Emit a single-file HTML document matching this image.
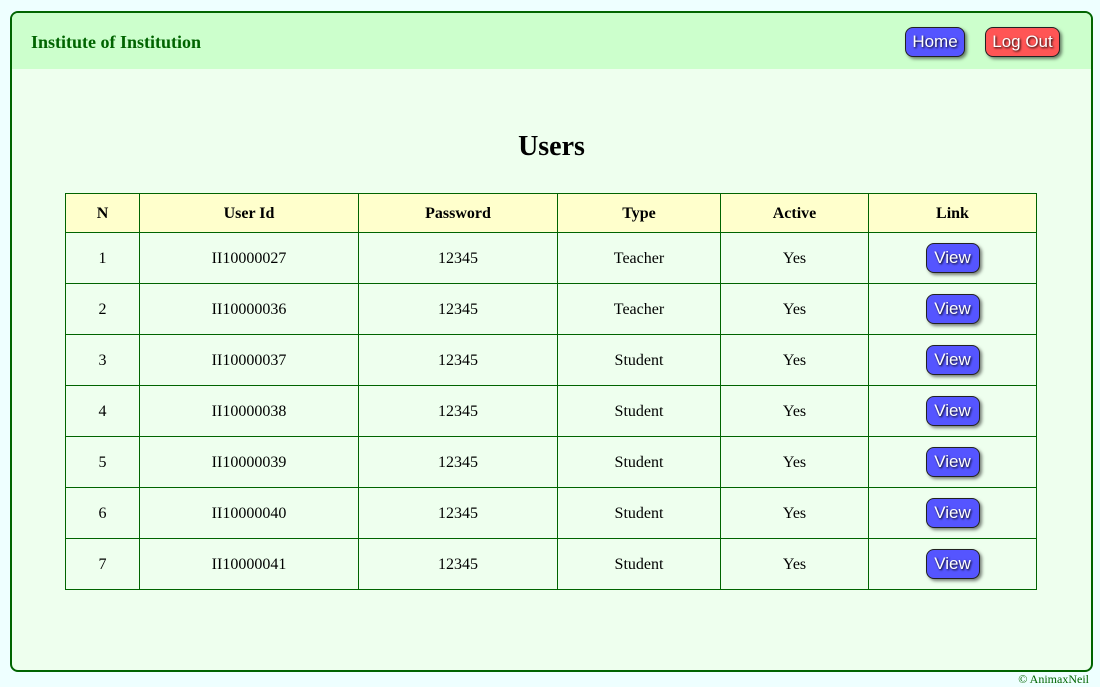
<!DOCTYPE html>
<html><head><style>
body{margin:0;background:#eeffff;font-family:"Liberation Serif",serif;width:1100px;height:687px;position:relative;overflow:hidden}
.box{position:absolute;left:10px;top:11px;width:1079px;height:657px;border:2px solid #006400;border-radius:8px;background:#eeffee;overflow:hidden}
.hdr{height:56px;background:#ccffcc;position:relative}
.title{position:absolute;left:19px;top:19px;font-weight:bold;font-size:18px;color:#006400}
.btn{position:absolute;font-family:"Liberation Sans",sans-serif;color:#fff;font-size:17px;border:1px solid #222;border-radius:8px;box-shadow:2px 2px 3px rgba(0,0,0,.5);text-shadow:1px 1px 2px #000;text-align:center;box-sizing:border-box}
.blue{background:#5555ff}.red{background:#ff5555}
h1{position:absolute;left:0;right:0;top:118px;margin:0;text-align:center;font-size:28px}
table{position:absolute;left:53px;top:180px;border-collapse:collapse;font-size:16px}
td,th{border:1px solid #006400;text-align:center;padding:2px 0 0 0}
th{background:#ffffcc;height:36px}
td{height:48px}
.v{display:inline-block;position:relative;width:54px;height:30px;line-height:28px;top:-1px}
.foot{position:absolute;right:11px;top:672px;font-size:12px;color:#006400}
</style></head><body>
<div class="box">
<div class="hdr"><div class="title">Institute of Institution</div>
<div class="btn blue" style="left:893px;top:14px;width:60px;height:30px;line-height:27px">Home</div>
<div class="btn red" style="left:973px;top:14px;width:75px;height:30px;line-height:27px">Log Out</div>
</div>
<h1>Users</h1>
<table>
<tr><th style="width:73px">N</th><th style="width:218px">User Id</th><th style="width:198px">Password</th><th style="width:162px">Type</th><th style="width:147px">Active</th><th style="width:167px">Link</th></tr>
<tr><td>1</td><td>II10000027</td><td>12345</td><td>Teacher</td><td>Yes</td><td><span class="btn blue v">View</span></td></tr>
<tr><td>2</td><td>II10000036</td><td>12345</td><td>Teacher</td><td>Yes</td><td><span class="btn blue v">View</span></td></tr>
<tr><td>3</td><td>II10000037</td><td>12345</td><td>Student</td><td>Yes</td><td><span class="btn blue v">View</span></td></tr>
<tr><td>4</td><td>II10000038</td><td>12345</td><td>Student</td><td>Yes</td><td><span class="btn blue v">View</span></td></tr>
<tr><td>5</td><td>II10000039</td><td>12345</td><td>Student</td><td>Yes</td><td><span class="btn blue v">View</span></td></tr>
<tr><td>6</td><td>II10000040</td><td>12345</td><td>Student</td><td>Yes</td><td><span class="btn blue v">View</span></td></tr>
<tr><td>7</td><td>II10000041</td><td>12345</td><td>Student</td><td>Yes</td><td><span class="btn blue v">View</span></td></tr>
</table>
</div>
<div class="foot">© AnimaxNeil</div>
</body></html>
